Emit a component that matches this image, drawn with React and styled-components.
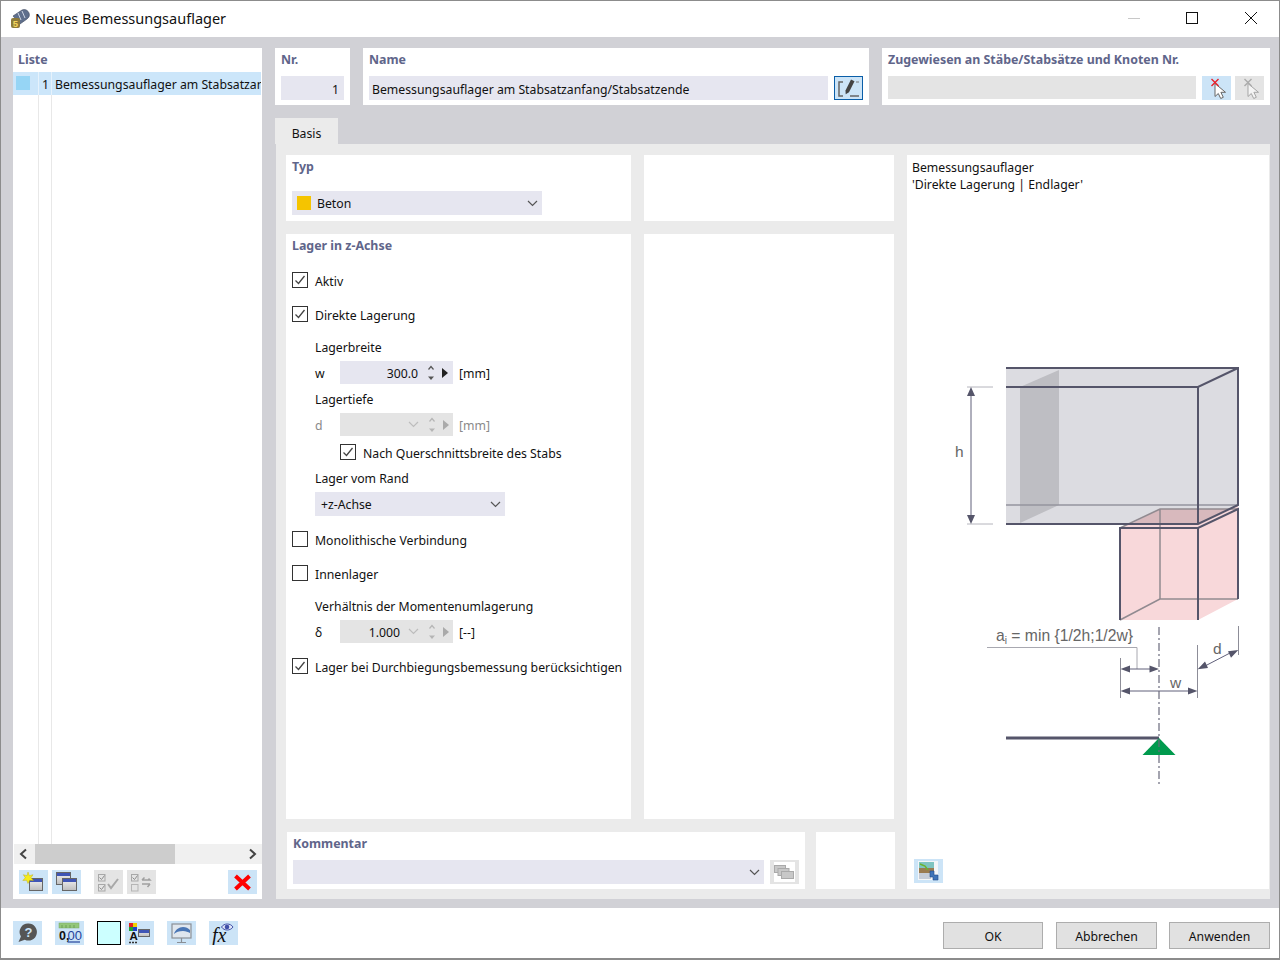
import React from "react";
import styled, { createGlobalStyle } from "styled-components";

const Global = createGlobalStyle`
  html, body { margin: 0; padding: 0; background: #fff; }
  * { box-sizing: border-box; }
`;

const FONT = `"Noto Sans", "Open Sans", "Liberation Sans", sans-serif`;

const Win = styled.div`
  width: 1280px; height: 960px; display: flex; flex-direction: column;
  background: #fff; border: 1px solid #8c8c8c; border-width: 1px 1px 2px 1px;
  font-family: ${FONT}; font-size: 12.25px; color: #111; overflow: hidden;
`;
const TitleBar = styled.header`
  height: 36px; flex: none; display: flex; align-items: center; padding: 0 0 2px 9px; background: #fff;
`;
const TitleText = styled.div`
  font-size: 14.5px; margin-left: 5px; color: #111; flex: 1;
`;
const WinCtl = styled.svg`
  width: 12px; height: 12px; flex: none; margin-right: ${p => p.$mr}px; display: block;
`;
const Body = styled.main`
  flex: 1; min-height: 0; background: #d1d1d6; display: flex; padding: 11px 9px 9px 12px; gap: 13px;
`;
const Panel = styled.section`
  background: #fff; display: flex; flex-direction: column;
`;
const Heading = styled.div`
  font-weight: 700; font-size: 12.4px; color: #60658a; height: 22px; line-height: 23px; white-space: nowrap;
`;
const ListPanel = styled(Panel)`
  width: 249px; flex: none;
`;
const ListHeading = styled(Heading)`
  padding-left: 5px; height: 24px;
`;
const ListArea = styled.div`
  flex: 1; min-height: 0; display: flex; flex-direction: column;
  background-image: linear-gradient(#e8e8e8, #e8e8e8), linear-gradient(#e8e8e8, #e8e8e8);
  background-size: 1px 100%, 1px 100%; background-position: 25px 0, 38px 0; background-repeat: no-repeat;
`;
const ListRow = styled.div`
  height: 23px; flex: none; margin-right: 1px; background: #cce6fa; display: flex; align-items: flex-start; overflow: hidden; white-space: nowrap;
`;
const SwatchCell = styled.div`
  width: 26px; height: 100%; flex: none; padding: 4px 0 0 3px; border-right: 1px solid #e6f2fc;
`;
const Swatch = styled.div`
  width: 14px; height: 14px; flex: none; background: ${p => p.$c};
`;
const NumCell = styled.div`
  width: 13px; flex: none; height: 100%; line-height: 25px; text-align: right; padding-right: 2px; border-right: 1px solid #e6f2fc;
`;
const RowName = styled.div`
  padding-left: 3px; line-height: 25px;
`;
const Scrollbar = styled.div`
  height: 20px; flex: none; margin-left: 1px; background: #f0f0f0; display: flex; align-items: center;
`;
const ScrollThumb = styled.div`
  width: 140px; height: 100%; background: #cdcdcd; margin-left: 3px; margin-right: auto;
`;
const ScrollArrow = styled.svg`
  width: 16px; height: 12px; flex: none; display: block; margin: 0 ${p => p.$mr || 0}px 0 ${p => p.$ml || 0}px;
`;
const ListTools = styled.div`
  height: 35px; flex: none; display: flex; align-items: flex-start; padding: 6px 0 0 6px;
`;
const IconBtn = styled.button`
  width: 29px; height: 24px; flex: none; padding: 0; margin: 0 0 0 ${p => p.$ml || 0}px;
  border: ${p => (p.$focus ? "1px solid #0a5ea8" : "0")};
  background: ${p => (p.$off ? "#e4e4e4" : "#cce4f7")};
  display: flex; align-items: center; justify-content: center;
`;
const BtnSvg = styled.svg`
  width: ${p => p.$w || 29}px; height: ${p => p.$h || 24}px; display: block; flex: none;
`;
const RightCol = styled.div`
  flex: 1; min-width: 0; display: flex; flex-direction: column;
`;
const TopRow = styled.div`
  display: flex; gap: 13px; height: 57px; flex: none;
`;
const TopPanel = styled(Panel)`
  width: ${p => p.$w}px; padding: 0 6px; flex: none;
`;
const TopHeading = styled(Heading)`
  height: 23px;
`;
const TopLine = styled.div`
  display: flex; margin-top: 5px; height: 24px; align-items: stretch;
`;
const Input = styled.div`
  flex: 1; min-width: 0; background: ${p => (p.$off ? "#e4e4e4" : "#e6e6f0")};
  text-align: ${p => p.$align || "left"}; padding: 3px 5px 0 3px; line-height: 21px; white-space: nowrap; overflow: hidden;
  margin-bottom: ${p => (p.$off ? 1 : 0)}px;
`;
const TabStrip = styled.div`
  margin-top: 13px; height: 26px; flex: none; display: flex;
`;
const Tab = styled.div`
  width: 63px; background: #ebebeb; text-align: center; line-height: 31px;
`;
const TabBody = styled.div`
  flex: 1; min-height: 0; margin-left: 1px; background: #ebebeb; padding: 11px 1px 10px 10px; display: flex; gap: 13px;
`;
const LeftArea = styled.div`
  width: 608px; flex: none; display: flex; flex-direction: column; gap: 13px;
`;
const PanelRow = styled.div`
  display: flex; gap: 13px; height: ${p => p.$h}px; flex: none;
`;
const ColA = styled(Panel)`
  width: 345px; flex: none; padding: 0 6px;
`;
const ColB = styled(Panel)`
  width: 250px; flex: none;
`;
const Select = styled.div`
  width: ${p => p.$w}px; height: 24px; background: #e6e6f0; display: flex; align-items: center; flex: none;
  margin-top: ${p => p.$mt || 0}px; margin-left: ${p => p.$ml || 0}px; padding: 0 4px 0 5px;
`;
const SelectText = styled.div`
  flex: 1; min-width: 0; margin-left: ${p => p.$ml || 0}px; white-space: nowrap;
`;
const Chevron = styled.svg`
  width: 11px; height: 7px; flex: none; display: block; margin-left: ${p => p.$ml || 0}px;
`;
const CheckRow = styled.label`
  display: flex; align-items: center; height: 24px; flex: none; margin-top: ${p => p.$mt}px; margin-left: ${p => p.$ml || 0}px; white-space: nowrap;
`;
const CheckBox = styled.span`
  width: 16px; height: 16px; flex: none; border: 1px solid #333; background: #fff; display: flex; align-items: center; justify-content: center; margin-right: 7px;
`;
const CheckText = styled.span`
  padding-top: 2px;
`;
const SubLabel = styled.div`
  height: 20px; line-height: 22px; margin: ${p => p.$mt}px 0 0 23px; flex: none; white-space: nowrap;
`;
const FieldRow = styled.div`
  height: 23px; flex: none; display: flex; align-items: center; margin: ${p => p.$mt}px 0 0 23px;
  color: ${p => (p.$off ? "#8a8a8a" : "inherit")};
`;
const Sym = styled.div`
  width: 25px; flex: none; padding-top: 2px;
`;
const Field = styled.div`
  width: 113px; height: 23px; flex: none; display: flex; align-items: center; background: ${p => (p.$off ? "#e4e4e4" : "#e6e6f0")};
`;
const FieldVal = styled.div`
  width: ${p => p.$w}px; flex: none; text-align: right; color: #111; padding-top: 2px;
`;
const Spin = styled.svg`
  width: 10px; height: 18px; margin-left: 8px; flex: none; display: block;
`;
const Step = styled.svg`
  width: 6px; height: 10px; margin-left: 6px; flex: none; display: block;
`;
const Unit = styled.div`
  margin-left: 6px; padding-top: 2px;
`;
const Picture = styled(Panel)`
  width: 362px; flex: none; padding: 4px 0 6px;
`;
const Caption = styled.div`
  padding-left: 5px; line-height: 17px; height: 17px; white-space: nowrap;
`;
const Drawing = styled.svg`
  width: 362px; height: 450px; display: block; margin-top: 157px; flex: none;
  font-family: "Liberation Sans", sans-serif;
`;
const PictureTools = styled.div`
  margin-top: auto; padding-left: 7px; display: flex;
`;
const CommentRow = styled.div`
  display: flex; gap: 11px; height: 57px; flex: none; padding-left: 1px;
`;
const CommentPanel = styled(Panel)`
  width: 518px; flex: none; padding: 0 6px;
`;
const CommentLine = styled.div`
  display: flex; margin-top: 6px; gap: 6px;
`;
const BlankPanel = styled(Panel)`
  width: 79px; flex: none;
`;
const Footer = styled.footer`
  height: 50px; flex: none; display: flex; align-items: flex-start; padding: 13px 9px 0 12px; background: #fff;
`;
const ColorWell = styled.div`
  width: 24px; height: 24px; flex: none; background: #ccffff; border: 1.5px solid #000; margin-left: 13px;
`;
const ActionBtn = styled.button`
  width: ${p => p.$w}px; height: 27px; margin: 1px 0 0 ${p => p.$ml}px; flex: none; background: #e1e1e1; border: 1px solid #adadad;
  font: inherit; color: #111; padding: 2px 0 0; line-height: 22px;
`;

const ChevronIcon = ({ ml, off }) => (
  <Chevron viewBox="0 0 11 7" $ml={ml}>
    <path d="M1 1l4.500 4.500L10 1" fill="none" stroke={off ? "#bdbdbd" : "#555"} strokeWidth="1.2" />
  </Chevron>
);
const Tick = () => (
  <svg width="14" height="14" viewBox="0 0 14 14">
    <path d="M2.500 7.500l3 3 6-7.500" fill="none" stroke="#444" strokeWidth="1.3" />
  </svg>
);
const Check = ({ on, mt, ml, children }) => (
  <CheckRow $mt={mt} $ml={ml}>
    <CheckBox>{on && <Tick />}</CheckBox>
    <CheckText>{children}</CheckText>
  </CheckRow>
);
const SpinIcon = ({ off }) => (
  <Spin viewBox="0 0 10 18">
    <path d="M2.500 5.500L5 2.500l2.500 3" fill="none" stroke={off ? "#b5b5b5" : "#555"} strokeWidth="1.2" />
    <path d="M5 16L8 12.500H2z" fill={off ? "#b5b5b5" : "#555"} />
  </Spin>
);
const StepIcon = ({ off }) => (
  <Step viewBox="0 0 6 10"><path d="M0 0l6 5-6 5z" fill={off ? "#aaa" : "#222"} /></Step>
);

const MiniWin = ({ x, y, w, h }) => (
  <g>
    <defs>
      <linearGradient id="mw" x1="0" y1="0" x2="0" y2="1"><stop offset="0" stopColor="#f4f4f4" /><stop offset="1" stopColor="#bdbdbd" /></linearGradient>
    </defs>
    <rect x={x} y={y} width={w} height={h} fill="url(#mw)" stroke="#666" />
    <rect x={x + 0.5} y={y + 0.5} width={w - 1} height="3" fill="#3f55b5" />
  </g>
);
const I = ({ children }) => <BtnSvg viewBox="0 0 29 24">{children}</BtnSvg>;
const Cursor = ({ mark, body, edge }) => (
  <I>
    <path d="M13 7.500v13l3.300-3 2.400 5 2.600-1.200-2.400-5h4.600z" fill={body} stroke={edge} strokeWidth="1" />
    <path d="M9.500 3l7 7M16.500 3l-7 7" stroke={mark} strokeWidth="1.4" />
  </I>
);

const Diagram = () => (
  <Drawing viewBox="907 350 362 450">
    <polygon points="1006,368 1238,368 1238,505 1198,524 1006,524" fill="#dcdce1" />
    <polygon points="1020,387 1059,370 1059,505 1020,523" fill="#bebec3" />
    <path d="M1006 505H1238" stroke="#94949e" strokeWidth="1.6" fill="none" />
    <polygon points="1120,528 1131,524 1198,524 1238,505 1238,599 1198,620 1120,620" fill="#f8d8da" />
    <polygon points="1131,524 1160,509 1228,509 1198,524" fill="#d8b9bd" />
    <path d="M1120 528L1160 509H1238M1160 509V599L1120 620M1160 599H1238" stroke="#918a90" strokeWidth="1.5" fill="none" />
    <path d="M1006 368H1238V505L1198 524H1006M1006 387H1198L1238 368M1198 387V524" stroke="#55556a" strokeWidth="2" fill="none" />
    <path d="M1120 620V528H1198L1238 509V599M1198 528V620" stroke="#55556a" strokeWidth="2" fill="none" />
    <path d="M967 387H993M967 524H993" stroke="#b4b4bc" strokeWidth="1" />
    <path d="M971 394V516" stroke="#60607a" strokeWidth="1" />
    <path d="M971 387l-4 9h8zM971 524l-4-9h8z" fill="#55556a" />
    <text x="955" y="457" fontSize="15.5" fill="#666">h</text>
    <text x="996" y="641" fontSize="15.700" fill="#666">a<tspan fontSize="10" dy="3">i</tspan><tspan dy="-3"> = min {"{"}1/2h;1/2w{"}"}</tspan></text>
    <path d="M987 647.500H1137V669" stroke="#a8a8b0" strokeWidth="1" fill="none" />
    <path d="M1120.500 658V698M1197.500 645V698M1238.500 626V655" stroke="#8d8d98" strokeWidth="1" fill="none" />
    <path d="M1128 669H1152M1128 691H1190M1205 666L1230 653" stroke="#60607a" strokeWidth="1" fill="none" />
    <path d="M1120.500 669l9.500-3.500v7zM1159 669l-9.500-3.500v7zM1120.500 691l9.500-3.500v7zM1197.500 691l-9.500-3.500v7zM1197.700 669.300l7.300-7.800 3 6.500zM1238.300 650l-7.300 7.800-3-6.500z" fill="#55556a" />
    <text x="1170" y="688" fontSize="15.5" fill="#666">w</text>
    <text x="1213" y="654" fontSize="15.5" fill="#666">d</text>
    <path d="M1006 738H1159" stroke="#55556a" strokeWidth="3" fill="none" />
    <polygon points="1159,738 1175.500,755 1142.500,755" fill="#009a4d" />
    <path d="M1159 627V786" stroke="#6a6a7c" strokeWidth="1.2" strokeDasharray="8 3 2 3" fill="none" />
  </Drawing>
);

export default function App() {
  return (
    <>
      <Global />
      <Win>
        <TitleBar>
          <svg width="20" height="20" viewBox="0 0 20 20" style={{ flex: "none" }}>
            <path d="M3 8L12 2c3-1.500 6 .5 7 3s0 4.500-2 6l-7 5z" fill="#5f6f8c" stroke="#3c465c" strokeWidth=".6" />
            <path d="M8 5l3 7M12 3l3 7" stroke="#cfd6e4" strokeWidth="1" />
            <rect x="1" y="10" width="9" height="10" rx="2" fill="#8d7a3a" />
            <text x="2.800" y="18.500" fontSize="9.500" fontWeight="700" fontFamily="Liberation Sans" fill="#f5d75c">5</text>
          </svg>
          <TitleText>Neues Bemessungsauflager</TitleText>
          <WinCtl viewBox="0 0 12 12" $mr={46}><path d="M0 6.500H12" stroke="#c8c8c8" /></WinCtl>
          <WinCtl viewBox="0 0 12 12" $mr={47}><rect x=".5" y=".5" width="11" height="11" fill="none" stroke="#111" /></WinCtl>
          <WinCtl viewBox="0 0 12 12" $mr={22}><path d="M0 0l12 12M12 0L0 12" stroke="#111" /></WinCtl>
        </TitleBar>
        <Body>
          <ListPanel>
            <ListHeading>Liste</ListHeading>
            <ListArea>
              <ListRow>
                <SwatchCell><Swatch $c="#96d5f5" /></SwatchCell>
                <NumCell>1</NumCell>
                <RowName>Bemessungsauflager am Stabsatzanfang/Stabsatzende</RowName>
              </ListRow>
            </ListArea>
            <Scrollbar>
              <ScrollArrow viewBox="0 0 16 12" $ml={2}><path d="M10 1.500L5 6l5 4.500" fill="none" stroke="#444" strokeWidth="2" /></ScrollArrow>
              <ScrollThumb />
              <ScrollArrow viewBox="0 0 16 12" $mr={2}><path d="M6 1.500L11 6l-5 4.500" fill="none" stroke="#444" strokeWidth="2" /></ScrollArrow>
            </Scrollbar>
            <ListTools>
              <IconBtn aria-label="Neu"><I>
                <MiniWin x={10.500} y={8.500} w={13} h={12} />
                <path d="M9 2l1.300 3.700 3.700-1-2 3 2.500 2.800-3.800-.2L9 13.500 7.600 10.300l-3.800.2 2.500-2.800-2-3 3.700 1z" fill="#f7ec1c" stroke="#b8a400" strokeWidth=".4" />
              </I></IconBtn>
              <IconBtn $ml={4} aria-label="Kopieren"><I>
                <MiniWin x={4.500} y={2.500} w={14} h={12} />
                <MiniWin x={10.500} y={8.500} w={14} h={12} />
              </I></IconBtn>
              <IconBtn $ml={13} $off aria-label="Alle"><I>
                <rect x="4.500" y="4.500" width="6.500" height="6.500" fill="none" stroke="#a8a8a8" />
                <rect x="4.500" y="14.500" width="6.500" height="6.500" fill="none" stroke="#a8a8a8" />
                <path d="M5.500 7.500l2 2 3-4M5.500 17.500l2 2 3-4" fill="none" stroke="#8d8d8d" />
                <path d="M14 14l3 4 7-9" fill="none" stroke="#a8a8a8" strokeWidth="2" />
              </I></IconBtn>
              <IconBtn $ml={4} $off aria-label="Umkehren"><I>
                <rect x="4.500" y="4.500" width="6.500" height="6.500" fill="none" stroke="#a8a8a8" />
                <rect x="4.500" y="14.500" width="6.500" height="6.500" fill="none" stroke="#b5b5b5" />
                <path d="M5.500 7.500l2 2 3-4" fill="none" stroke="#8d8d8d" />
                <path d="M15 10h8l-1.500-1.500M15 10l2.500-2.500M23 14h-8M23 14l-2.500 3" fill="none" stroke="#a0a0a0" strokeWidth="1.500" />
              </I></IconBtn>
              <IconBtn $ml={72} aria-label="Löschen"><I>
                <path d="M7.500 6l14 13M21.500 6l-14 13" stroke="#f00" strokeWidth="4" />
              </I></IconBtn>
            </ListTools>
          </ListPanel>
          <RightCol>
            <TopRow>
              <TopPanel $w={75}>
                <TopHeading>Nr.</TopHeading>
                <TopLine><Input $align="right">1</Input></TopLine>
              </TopPanel>
              <TopPanel $w={506}>
                <TopHeading>Name</TopHeading>
                <TopLine>
                  <Input>Bemessungsauflager am Stabsatzanfang/Stabsatzende</Input>
                  <IconBtn $ml={6} $focus aria-label="Bearbeiten"><BtnSvg viewBox="0 0 27 22" $w={27} $h={22}>
                    <path d="M8 5H4v14h4" fill="none" stroke="#666" strokeWidth="1.500" />
                    <path d="M15 19h9" fill="none" stroke="#666" strokeWidth="1.500" />
                    <path d="M16 2.500l3.500 1.800-5.500 11-3.300 2-.2-3.800z" fill="#444" />
                    <path d="M21 5h3" stroke="#777" />
                  </BtnSvg></IconBtn>
                </TopLine>
              </TopPanel>
              <TopPanel $w={388}>
                <TopHeading>Zugewiesen an Stäbe/Stabsätze und Knoten Nr.</TopHeading>
                <TopLine>
                  <Input $off />
                  <IconBtn $ml={6} aria-label="Wählen"><Cursor mark="#e8202a" body="#fff" edge="#666" /></IconBtn>
                  <IconBtn $ml={4} $off aria-label="Entfernen"><Cursor mark="#aaa" body="#f4f4f4" edge="#a5a5a5" /></IconBtn>
                </TopLine>
              </TopPanel>
            </TopRow>
            <TabStrip><Tab>Basis</Tab></TabStrip>
            <TabBody>
              <LeftArea>
                <PanelRow $h={66}>
                  <ColA>
                    <Heading>Typ</Heading>
                    <Select $w={250} $mt={14}>
                      <Swatch $c="#f5c400" />
                      <SelectText $ml={6}>Beton</SelectText>
                      <ChevronIcon />
                    </Select>
                  </ColA>
                  <ColB />
                </PanelRow>
                <PanelRow $h={585}>
                  <ColA>
                    <Heading>Lager in z-Achse</Heading>
                    <Check on mt={12}>Aktiv</Check>
                    <Check on mt={10}>Direkte Lagerung</Check>
                    <SubLabel $mt={11}>Lagerbreite</SubLabel>
                    <FieldRow $mt={4}>
                      <Sym>w</Sym>
                      <Field><FieldVal $w={78}>300.0</FieldVal><SpinIcon /><StepIcon /></Field>
                      <Unit>[mm]</Unit>
                    </FieldRow>
                    <SubLabel $mt={5}>Lagertiefe</SubLabel>
                    <FieldRow $mt={4} $off>
                      <Sym>d</Sym>
                      <Field $off><FieldVal $w={60} /><ChevronIcon ml={8} off /><SpinIcon off /><StepIcon off /></Field>
                      <Unit>[mm]</Unit>
                    </FieldRow>
                    <Check on mt={4} ml={48}>Nach Querschnittsbreite des Stabs</Check>
                    <SubLabel $mt={4}>Lager vom Rand</SubLabel>
                    <Select $w={190} $mt={4} $ml={23}>
                      <SelectText $ml={1}>+z-Achse</SelectText>
                      <ChevronIcon />
                    </Select>
                    <Check mt={11}>Monolithische Verbindung</Check>
                    <Check mt={10}>Innenlager</Check>
                    <SubLabel $mt={11}>Verhältnis der Momentenumlagerung</SubLabel>
                    <FieldRow $mt={4}>
                      <Sym>δ</Sym>
                      <Field $off><FieldVal $w={60}>1.000</FieldVal><ChevronIcon ml={8} off /><SpinIcon off /><StepIcon off /></Field>
                      <Unit>[--]</Unit>
                    </FieldRow>
                    <Check on mt={11}>Lager bei Durchbiegungsbemessung berücksichtigen</Check>
                  </ColA>
                  <ColB />
                </PanelRow>
                <CommentRow>
                  <CommentPanel>
                    <Heading>Kommentar</Heading>
                    <CommentLine>
                      <Select $w={471}>
                        <SelectText />
                        <ChevronIcon />
                      </Select>
                      <IconBtn $off aria-label="Kommentare"><I>
                        <rect x="4" y="2" width="21" height="20" fill="#fff" />
                        <rect x="4.500" y="5.500" width="11" height="7" fill="#c8c8c8" stroke="#aaa" />
                        <rect x="8" y="8.500" width="11" height="7" fill="#c8c8c8" stroke="#aaa" />
                        <rect x="11.500" y="11.500" width="12" height="7" fill="#c8c8c8" stroke="#aaa" />
                      </I></IconBtn>
                    </CommentLine>
                  </CommentPanel>
                  <BlankPanel />
                </CommentRow>
              </LeftArea>
              <Picture>
                <Caption>Bemessungsauflager</Caption>
                <Caption>'Direkte Lagerung | Endlager'</Caption>
                <Diagram />
                <PictureTools>
                  <IconBtn aria-label="Bild"><I>
                    <rect x="4" y="2" width="20" height="19" fill="#f4f6f8" />
                    <rect x="5" y="3" width="15" height="6" fill="#7fc4c0" />
                    <rect x="5" y="9" width="15" height="5" fill="#9a7b50" />
                    <path d="M6 5l5 2 3 4" fill="none" stroke="#6ab32e" strokeWidth="1.500" />
                    <rect x="5" y="14" width="12" height="6" fill="#c5ccd8" />
                    <path d="M16 12h4v4h4v5h-5v-3h-3z" fill="#3f74b8" stroke="#1f4b8a" strokeWidth=".6" />
                  </I></IconBtn>
                </PictureTools>
              </Picture>
            </TabBody>
          </RightCol>
        </Body>
        <Footer>
          <IconBtn aria-label="Hilfe"><I>
            <path d="M15.500 2.500a8.500 8.500 0 1 1-3.700 16.200L5.500 21l2.400-5.500a8.500 8.500 0 0 1 7.600-13z" fill="#555" />
            <text x="15.500" y="15.500" textAnchor="middle" fontSize="13" fontWeight="700" fontFamily="Liberation Sans" fill="#cce4f7">?</text>
          </I></IconBtn>
          <IconBtn $ml={13} aria-label="Zahlen"><I>
            <rect x="4" y="2" width="20" height="5" fill="#93c77a" stroke="#7aa862" strokeWidth=".5" />
            <path d="M7 4v3M11 4v3M15 4v3M19 4v3" stroke="#5f8f4c" strokeWidth=".7" />
            <text x="4" y="19" fontSize="12.5" fontWeight="700" fontFamily="Liberation Sans" fill="#111">0,</text>
            <text x="12.500" y="19" fontSize="13" fontFamily="Liberation Sans" fill="#23439c">00</text>
            <path d="M12.500 21H25" stroke="#23439c" strokeWidth="1.200" />
          </I></IconBtn>
          <ColorWell />
          <IconBtn $ml={4} aria-label="Farben"><I>
            <rect x="4" y="2" width="4" height="4" fill="#e02020" />
            <rect x="8" y="2" width="4" height="4" fill="#f0d000" />
            <rect x="4" y="6" width="4" height="4" fill="#20a030" />
            <rect x="8" y="6" width="4" height="4" fill="#2040c8" />
            <text x="4.500" y="19" fontSize="11.5" fontWeight="700" fontFamily="Liberation Sans" fill="#111">A</text>
            <path d="M4 21.500h8" stroke="#333" strokeDasharray="2 1" strokeWidth="1.500" />
            <MiniWin x={13.500} y={8.500} w={11} h={7} />
          </I></IconBtn>
          <IconBtn $ml={13} aria-label="Anzeige"><I>
            <rect x="5" y="3" width="19" height="14" fill="#dfe6ee" stroke="#8a8f96" strokeWidth="1.200" />
            <path d="M7 13c1-4 5-7 9-7 3 0 5 1 7 3v3c-2-1-4-2-7-2-4 0-7 1-9 3z" fill="#4a76b5" />
            <path d="M14.500 17v4M10 21.500h9" stroke="#8a8f96" strokeWidth="1.200" />
          </I></IconBtn>
          <IconBtn $ml={13} aria-label="Formel"><I>
            <text x="3" y="21" fontSize="20" fontStyle="italic" fontFamily="Liberation Serif" fill="#111">fx</text>
            <path d="M12.500 6c2.500-4 9-4 11.500 0-2.500 4-9 4-11.500 0z" fill="#dfe6f7" stroke="#3f4fa8" />
            <circle cx="18" cy="6" r="2.300" fill="#3f4fa8" />
          </I></IconBtn>
          <ActionBtn $w={100} $ml={705}>OK</ActionBtn>
          <ActionBtn $w={101} $ml={13}>Abbrechen</ActionBtn>
          <ActionBtn $w={101} $ml={12}>Anwenden</ActionBtn>
        </Footer>
      </Win>
    </>
  );
}
